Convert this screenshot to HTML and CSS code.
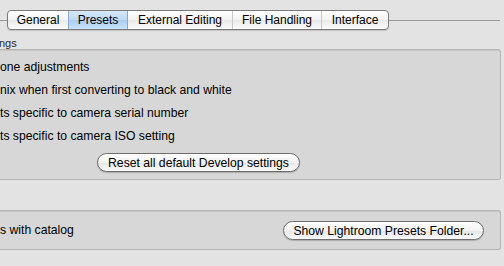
FILE: index.html
```html
<!DOCTYPE html>
<html lang="en">
<head>
  <meta charset="UTF-8" />
  <title>Preferences - Presets</title>
  <link rel="stylesheet" href="styles.css">
</head>
<body>
  <div class="tabbar">
    <div class="tabs">
      <span class="tab">General</span>
      <span class="tab selected">Presets</span>
      <span class="tab">External Editing</span>
      <span class="tab">File Handling</span>
      <span class="tab">Interface</span>
    </div>
  </div>

  <p class="group-label">ngs</p>
  <div class="group develop">
    <p class="row">one adjustments</p>
    <p class="row">nix when first converting to black and white</p>
    <p class="row">ts specific to camera serial number</p>
    <p class="row">ts specific to camera ISO setting</p>
    <div class="button-row">
      <button class="push">Reset all default Develop settings</button>
    </div>
  </div>

  <div class="group catalog">
    <p class="row">s with catalog</p>
    <button class="push">Show Lightroom Presets Folder...</button>
  </div>
</body>
</html>
```

FILE: styles.css
```css
body {
  margin: 0;
  width: 504px;
  height: 266px;
  overflow: hidden;
  background: #e3e3e3;
  color: #000;
  font-family: "Liberation Sans", Arial, sans-serif;
  font-size: 12px;
}

.tabbar {
  display: flex;
  align-items: center;
  margin-top: 10px;
  height: 20px;
}

.tabbar::before,
.tabbar::after {
  content: "";
  border-top: 1px solid #9a9a9a;
}

.tabbar::before {
  width: 7px;
}

.tabbar::after {
  flex: 1;
  margin-right: 4px;
}

.tabs {
  display: flex;
  height: 18px;
  border: 1px solid #7b7b7b;
  border-radius: 4px;
  overflow: hidden;
  background: linear-gradient(#ffffff, #f3f3f3 50%, #e9e9e9 51%, #fbfbfb);
  box-shadow: 0 1px 1px rgba(0,0,0,0.15);
}

.tab {
  display: flex;
  align-items: center;
  justify-content: center;
  border-left: 1px solid #c9c9c9;
}

.tab:first-child { border-left: none; width: 60px; }
.tab:nth-child(2) { width: 58px; }
.tab:nth-child(3) { width: 104px; }
.tab:nth-child(4) { width: 88px; }
.tab:nth-child(5) { width: 66px; }

.tab.selected {
  background: linear-gradient(#d6e8fb, #bcd8f6 50%, #a9cdf3 51%, #c9e3fb);
  border-left-color: #8ba8c8;
}

.tab.selected + .tab {
  border-left-color: #8ba8c8;
}

.group-label {
  margin: 8px 0 0 -1px;
  height: 11px;
  line-height: 11px;
  font-size: 11px;
  color: #2a2a2a;
}

.group {
  margin-right: 3px;
  background: #d7d7d7;
  border: 1px solid #b5b5b5;
  border-left: none;
  border-radius: 0 3px 3px 0;
  box-shadow: inset 0 1px 0 #c6c6c6;
}

.develop {
  height: 131px;
  padding-top: 6px;
  box-sizing: border-box;
}

.row {
  margin: 0;
  height: 23px;
  line-height: 23px;
  font-size: 12.2px;
  white-space: nowrap;
}

.button-row {
  padding-left: 97px;
  padding-top: 5px;
}

.push {
  height: 19px;
  padding: 0;
  border: 1px solid #6e6e6e;
  border-radius: 10px;
  background: linear-gradient(#ffffff, #f2f2f2 50%, #e6e6e6 51%, #fafafa);
  box-shadow: 0 1px 1px rgba(0,0,0,0.2);
  font-family: inherit;
  font-size: 12.2px;
  color: #000;
  white-space: nowrap;
}

.develop .push {
  width: 203px;
}

.catalog {
  margin-top: 30px;
  height: 38px;
  display: flex;
  align-items: center;
  justify-content: space-between;
  padding-right: 16px;
}

.catalog .row {
  margin-top: 1px;
}

.catalog .push {
  width: 201px;
  margin-top: 1px;
}
```
